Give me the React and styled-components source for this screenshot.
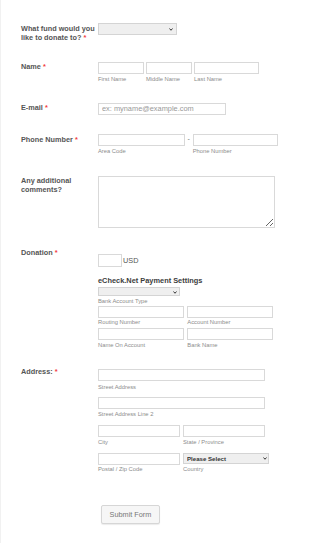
import React from 'react';
import styled, { createGlobalStyle } from 'styled-components';

const Global = createGlobalStyle`
  body {
    margin: 0;
    background: #fff;
    font-family: "Liberation Sans", Arial, sans-serif;
  }
`;

const Page = styled.form`
  min-height: 543px;
  box-sizing: border-box;
  border-left: 1px solid #f1f1f1;
  padding: 23px 0 0 20px;
`;

const Row = styled.div`
  display: flex;
  align-items: flex-start;
  margin-top: ${p => p.$mt || 0}px;
`;

const Label = styled.label`
  width: 77px;
  flex-shrink: 0;
  box-sizing: border-box;
  padding-top: ${p => (p.$pt != null ? p.$pt : 1.7)}px;
  font-size: 7.3px;
  line-height: 8.3px;
  font-weight: bold;
  color: #555;
`;

const Req = styled.span`
  color: #f23a3c;
  margin-left: 2px;
`;

const Field = styled.div`
  display: flex;
  flex-direction: column;
  align-items: flex-start;
  margin-top: ${p => p.$mt || 0}px;
`;

const Line = styled.div`
  display: flex;
  align-items: flex-start;
  gap: ${p => (p.$gap != null ? p.$gap : 3)}px;
  margin-top: ${p => p.$mt || 0}px;
`;

const Group = styled.div`
  display: flex;
  flex-direction: column;
`;

const Input = styled.input`
  display: block;
  box-sizing: border-box;
  width: ${p => p.$w}px;
  height: ${p => p.$h || 12.5}px;
  margin: 0;
  padding: 0 3px;
  border: 1px solid #d9d9d9;
  background: #fff;
  font-family: inherit;
  font-size: 7.4px;
  color: #555;
  outline: none;
  &::placeholder {
    color: #999;
  }
`;

const Sub = styled.span`
  display: block;
  margin-top: ${p => (p.$mt != null ? p.$mt : 2)}px;
  font-size: 5.8px;
  line-height: 7px;
  color: #8c8c8c;
  white-space: nowrap;
`;

const Dash = styled.span`
  width: 8px;
  text-align: center;
  font-size: 7px;
  line-height: 10px;
  color: #777;
`;

const Area = styled.textarea`
  display: block;
  box-sizing: border-box;
  width: 176.5px;
  height: 52px;
  margin: 0;
  border: 1px solid #d9d9d9;
  background: #fff;
  outline: none;
`;

const SelectBox = styled.div`
  position: relative;
  width: ${p => p.$w}px;
  height: ${p => p.$h}px;
  margin-top: ${p => p.$mt || 0}px;
  flex-shrink: 0;
`;

const Select = styled.select`
  display: block;
  appearance: none;
  -webkit-appearance: none;
  box-sizing: border-box;
  width: 100%;
  height: 100%;
  margin: 0;
  padding: 0 0 0 3px;
  border: 1px solid #d4d4d4;
  border-radius: 0;
  background: #efefef;
  font-family: inherit;
  font-size: 6.1px;
  font-weight: bold;
  color: #333;
  outline: none;
`;

const Chevron = styled.svg`
  position: absolute;
  right: ${p => p.$r}px;
  top: 50%;
  width: 4px;
  height: 3px;
  margin-top: -1.3px;
  pointer-events: none;
`;

const Unit = styled.span`
  margin-left: 1px;
  font-size: 7.3px;
  line-height: 13px;
  color: #555;
`;

const Title = styled.div`
  margin-top: 10px;
  font-size: 7.4px;
  line-height: 8.5px;
  font-weight: bold;
  color: #3d3d3d;
  white-space: nowrap;
`;

const Button = styled.button`
  display: block;
  box-sizing: border-box;
  width: 59px;
  height: 19px;
  margin-left: 3px;
  padding: 0;
  border: 1px solid #d6d6d6;
  border-radius: 2px;
  background: #f6f6f6;
  box-shadow: 0 1px 1px rgba(0, 0, 0, 0.08);
  font-family: inherit;
  font-size: 7.3px;
  color: #777;
`;

const Drop = ({ w, h, mt, r, children }) => (
  <SelectBox $w={w} $h={h} $mt={mt}>
    <Select defaultValue="">{children}</Select>
    <Chevron $r={r} viewBox="0 0 8 6">
      <polyline points="1,1 4,4.5 7,1" fill="none" stroke="#222" strokeWidth="1.8" />
    </Chevron>
  </SelectBox>
);

const Pair = ({ w, label, h, subMt, children }) => (
  <Group>
    {children || <Input $w={w} $h={h} />}
    <Sub $mt={subMt}>{label}</Sub>
  </Group>
);

export default function App() {
  return (
    <>
      <Global />
      <Page onSubmit={e => e.preventDefault()}>
        <Row>
          <Label $pt={2.4}>
            What fund would you like to donate to?<Req>*</Req>
          </Label>
          <Drop w={79} h={11.6} r={4}>
            <option value=""></option>
          </Drop>
        </Row>

        <Row $mt={19.7}>
          <Label>
            Name<Req>*</Req>
          </Label>
          <Line $gap={2.2}>
            <Pair w={45.7} label="First Name" />
            <Pair w={46} label="Middle Name" />
            <Pair w={65.3} label="Last Name" />
          </Line>
        </Row>

        <Row $mt={19.5}>
          <Label>
            E-mail<Req>*</Req>
          </Label>
          <Input $w={127.7} placeholder="ex: myname@example.com" />
        </Row>

        <Row $mt={18.8}>
          <Label>
            Phone Number<Req>*</Req>
          </Label>
          <Line $gap={0}>
            <Pair w={86.7} label="Area Code" />
            <Dash>-</Dash>
            <Pair w={85.4} label="Phone Number" />
          </Line>
        </Row>

        <Row $mt={20.2}>
          <Label>Any additional comments?</Label>
          <Area />
        </Row>

        <Row $mt={20}>
          <Label>
            Donation<Req>*</Req>
          </Label>
          <Field $mt={6}>
            <Line $gap={0}>
              <Input $w={24} $h={13} />
              <Unit>USD</Unit>
            </Line>
            <Title>eCheck.Net Payment Settings</Title>
            <Drop w={82} h={9} mt={2.2} r={3}>
              <option value=""></option>
            </Drop>
            <Sub $mt={1.3}>Bank Account Type</Sub>
            <Line $mt={1.3}>
              <Pair w={86.3} h={12} subMt={1.4} label="Routing Number" />
              <Pair w={86} h={12} subMt={1.4} label="Account Number" />
            </Line>
            <Line $mt={1.6}>
              <Pair w={86.3} h={12} subMt={1.7} label="Name On Account" />
              <Pair w={86} h={12} subMt={1.7} label="Bank Name" />
            </Line>
          </Field>
        </Row>

        <Row $mt={18}>
          <Label>
            Address:<Req>*</Req>
          </Label>
          <Field $mt={2.3}>
            <Pair w={167} h={12.4} subMt={2.3} label="Street Address" />
            <Line $mt={6}>
              <Pair w={167} h={12.7} subMt={1.3} label="Street Address Line 2" />
            </Line>
            <Line $mt={7}>
              <Pair w={82} h={12.7} subMt={1.3} label="City" />
              <Pair w={82} h={12.7} subMt={1.3} label="State / Province" />
            </Line>
            <Line $mt={7.3}>
              <Pair w={82} h={12} subMt={1.1} label="Postal / Zip Code" />
              <Pair label="Country" subMt={1.7}>
                <Drop w={86} h={11.3} r={2}>
                  <option value="">Please Select</option>
                </Drop>
              </Pair>
            </Line>
          </Field>
        </Row>

        <Row $mt={31.9}>
          <Label />
          <Button type="submit">Submit Form</Button>
        </Row>
      </Page>
    </>
  );
}
